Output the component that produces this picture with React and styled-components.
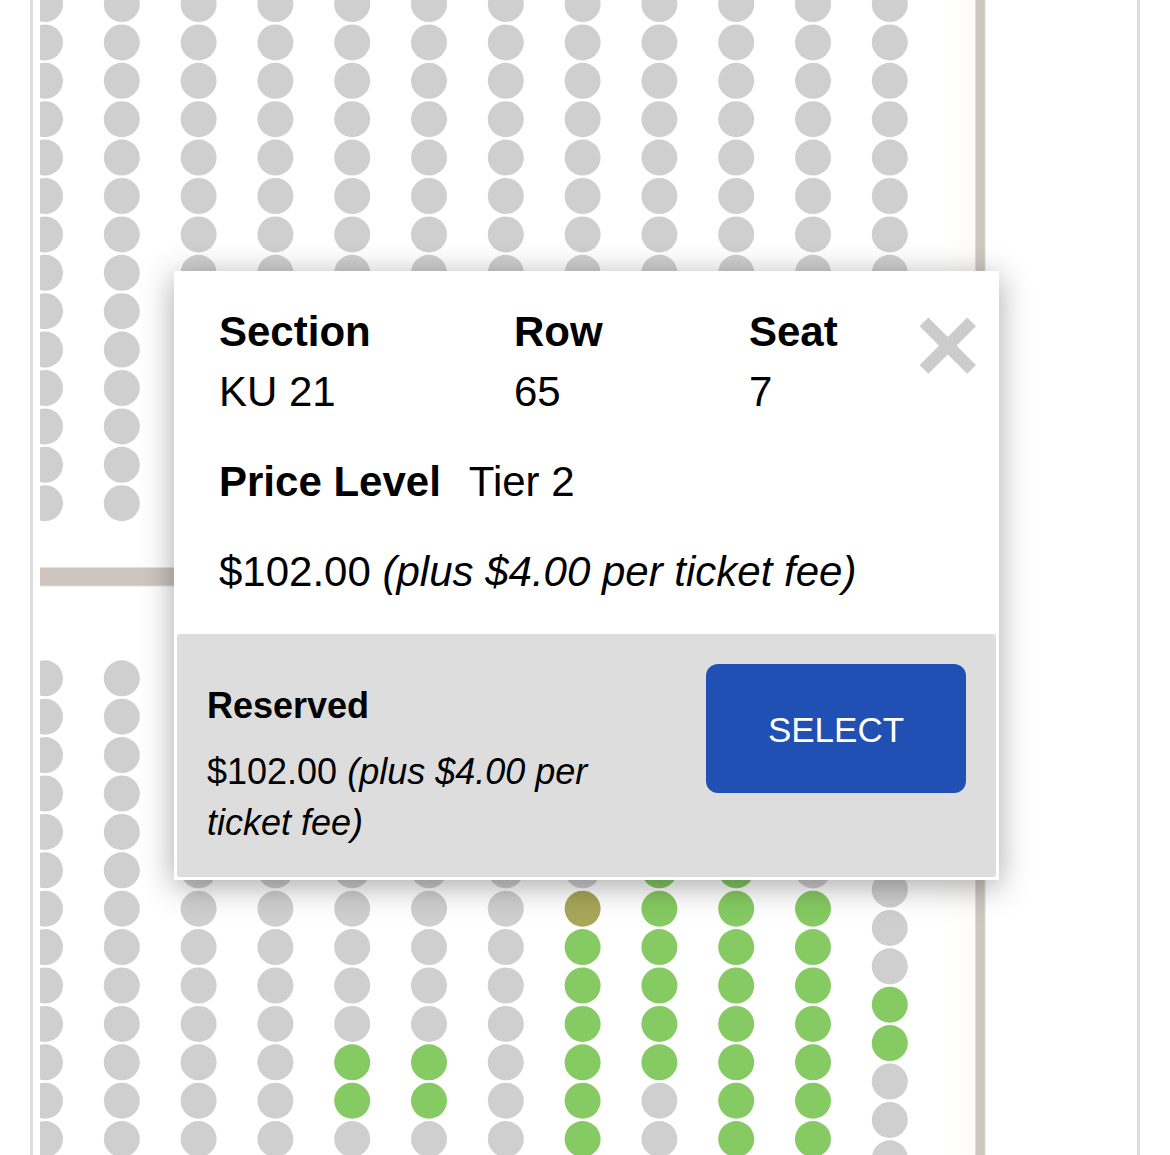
import React from "react";
import styled, { createGlobalStyle } from "styled-components";

const GlobalStyle = createGlobalStyle`
    *, *::before, *::after {
        box-sizing: border-box;
    }

    body {
        margin: 0;
        background-color: #ffffff;
        color: #000000;
        font-family: "Liberation Sans", Arial, Helvetica, sans-serif;
    }
`;

const SEAT_COLORS = {
    taken: '#cfcfcf',
    open: '#85ca62',
    selected: '#a7a65a',
};

const COLUMNS = 12;
const COLUMN_GAP = 76.8;
const ROW_GAP = 38.4;
const SEAT_RADIUS = 18;

// one string per column, one letter per row: . taken, o open, s selected
const UPPER_BLOCK = Array(COLUMNS).fill('..............');
const LOWER_BLOCK = [
    '.............',
    '.............',
    '.............',
    '.............',
    '..........oo.',
    '..........oo.',
    '.............',
    '......soooooo',
    '.....oooooo..',
    '.....oooooooo',
    '......ooooooo',
    '........oo...',
];

const STATUS = { '.': 'taken', o: 'open', s: 'selected' };

const Panel = styled.main`
    position: relative;
    margin: 0 30px;
    padding-left: 7px;
    border-left: 3px solid #dddddd;
    border-right: 3px solid #dddddd;
`;

const Map = styled.svg`
    display: block;
    width: 100%;
    height: auto;
`;

const Popup = styled.section`
    position: absolute;
    top: 271px;
    left: 141px;
    right: 138px;
    border: 3px solid #ffffff;
    background-color: #ffffff;
    box-shadow: 0 6px 30px rgba(0, 0, 0, 0.35);
`;

const Details = styled.div`
    display: flex;
    align-items: flex-start;
    padding: 28px 20px 32px 42px;
    font-size: 42px;
    line-height: 60px;
`;

const Info = styled.div`
    flex: 1;
    display: grid;
    gap: 30px;
`;

const Places = styled.dl`
    display: grid;
    grid-template-columns: 295px 235px 1fr;
    margin: 0;
`;

const Level = styled.dl`
    display: flex;
    gap: 28px;
    margin: 0;
`;

const Label = styled.dt`
    font-weight: bold;
`;

const Value = styled.dd`
    margin: 0;
`;

const Price = styled.p`
    margin: 0;
`;

const CloseButton = styled.button`
    display: flex;
    margin: 15px 0 0;
    padding: 0;
    border: none;
    background: none;
    color: #cccccc;
    cursor: pointer;
`;

const Offer = styled.div`
    display: flex;
    align-items: flex-start;
    gap: 60px;
    padding: 30px 30px 29px;
    border-radius: 3px;
    background-color: #dddddd;
    font-size: 36px;
    line-height: 51px;
`;

const OfferText = styled.div`
    flex: 1;
    display: grid;
    gap: 15px;
    padding-top: 16px;
`;

const OfferName = styled.h2`
    margin: 0;
    font-size: 36px;
    font-weight: bold;
`;

const SelectButton = styled.button`
    width: 260px;
    height: 129px;
    padding: 2px 0 0;
    border: none;
    border-radius: 12px;
    background-color: #2150b5;
    color: #ffffff;
    font-family: inherit;
    font-size: 35px;
    cursor: pointer;
`;

function Block({ columns, top, shift = 0 }) {
    return columns.map((rows, col) => {
        const offset = col === COLUMNS - 1 ? shift : 0;

        return rows.split('').map((seat, row) => (
            <circle
                key={col + '-' + row}
                cx={5 + col * COLUMN_GAP}
                cy={top + (row + offset) * ROW_GAP}
                r={SEAT_RADIUS}
                fill={SEAT_COLORS[STATUS[seat]]}
            />
        ));
    });
}

function SeatMap() {
    return (
        <Map viewBox="0 0 1097 1155" role="img" aria-label="Seat map">
            <defs>
                <linearGradient id="wall-glow">
                    <stop offset="0" stopColor="#fdfcf9" stopOpacity="0" />
                    <stop offset="1" stopColor="#fdfcf9" />
                </linearGradient>
            </defs>
            <rect x="900" y="0" width="35" height="1155" fill="url(#wall-glow)" />
            <rect x="0" y="567" width="940" height="19.5" fill="#e6e1dd" />
            <rect x="0" y="568" width="940" height="17.5" fill="#cdc5be" />
            <rect x="935" y="0" width="10.5" height="1155" fill="#e0dbd6" />
            <rect x="936" y="0" width="8.5" height="1155" fill="#cdc7c0" />
            <Block columns={UPPER_BLOCK} top={4} />
            <Block columns={LOWER_BLOCK} top={678.3} shift={0.5} />
        </Map>
    )
}

function Place({ label, value }) {
    return (
        <div>
            <Label>{label}</Label>
            <Value>{value}</Value>
        </div>
    )
}

function SeatPopup({ seat }) {
    return (
        <Popup role="dialog" aria-label="Seat details">
            <Details>
                <Info>
                    <Places>
                        <Place label="Section" value={seat.section} />
                        <Place label="Row" value={seat.row} />
                        <Place label="Seat" value={seat.number} />
                    </Places>
                    <Level>
                        <Label>Price Level</Label>
                        <Value>{seat.level}</Value>
                    </Level>
                    <Price>{seat.price} <em>{seat.fee}</em></Price>
                </Info>
                <CloseButton type="button" aria-label="Close">
                    <svg width="57" height="57" viewBox="0 0 57 57" stroke="currentColor" strokeWidth="12.4">
                        <path d="M5 4.8 L52.6 52.4 M52.6 4.8 L5 52.4" />
                    </svg>
                </CloseButton>
            </Details>
            <Offer>
                <OfferText>
                    <OfferName>Reserved</OfferName>
                    <Price>{seat.price} <em>{seat.fee}</em></Price>
                </OfferText>
                <SelectButton type="button">SELECT</SelectButton>
            </Offer>
        </Popup>
    )
}

export default function App() {
    const seat = {
        section: 'KU 21',
        row: '65',
        number: '7',
        level: 'Tier 2',
        price: '$102.00',
        fee: '(plus $4.00 per ticket fee)',
    };

    return (
        <>
            <GlobalStyle />
            <Panel>
                <SeatMap />
                <SeatPopup seat={seat} />
            </Panel>
        </>
    )
}
